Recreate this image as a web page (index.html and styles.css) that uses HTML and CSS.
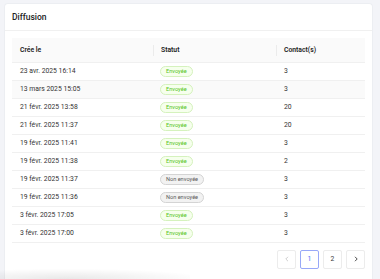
FILE: index.html
```html
<!DOCTYPE html>
<html lang="fr">
<head>
    <meta charset="UTF-8">
    <meta name="viewport" content="width=device-width, initial-scale=1.0">
    <title>Diffusion</title>
    <link rel="stylesheet" href="styles.css">
</head>
<body>
    <div class="card">
        <div class="card-header">Diffusion</div>
        <div class="card-body">
            <table class="table">
                <thead>
                    <tr>
                        <th class="col-date">Crée le</th>
                        <th class="col-status">Statut</th>
                        <th class="col-count">Contact(s)</th>
                    </tr>
                </thead>
                <tbody>
                    <tr><td>23 avr. 2025 16:14</td><td><span class="tag tag-sent">Envoyée</span></td><td>3</td></tr>
                    <tr class="is-hover"><td>13 mars 2025 15:05</td><td><span class="tag tag-sent">Envoyée</span></td><td>3</td></tr>
                    <tr><td>21 févr. 2025 13:58</td><td><span class="tag tag-sent">Envoyée</span></td><td>20</td></tr>
                    <tr><td>21 févr. 2025 11:37</td><td><span class="tag tag-sent">Envoyée</span></td><td>20</td></tr>
                    <tr><td>19 févr. 2025 11:41</td><td><span class="tag tag-sent">Envoyée</span></td><td>3</td></tr>
                    <tr><td>19 févr. 2025 11:38</td><td><span class="tag tag-sent">Envoyée</span></td><td>2</td></tr>
                    <tr><td>19 févr. 2025 11:37</td><td><span class="tag tag-unsent">Non envoyée</span></td><td>3</td></tr>
                    <tr><td>19 févr. 2025 11:36</td><td><span class="tag tag-unsent">Non envoyée</span></td><td>3</td></tr>
                    <tr><td>3 févr. 2025 17:05</td><td><span class="tag tag-sent">Envoyée</span></td><td>3</td></tr>
                    <tr><td>3 févr. 2025 17:00</td><td><span class="tag tag-sent">Envoyée</span></td><td>3</td></tr>
                </tbody>
            </table>

            <div class="pagination">
                <button class="page-btn is-disabled" aria-label="Précédent">
                    <svg width="6" height="6" viewBox="0 0 6 6"><path d="M4 0.8 L1.8 3 L4 5.2" fill="none" stroke="currentColor" stroke-width="0.9"/></svg>
                </button>
                <button class="page-btn is-active">1</button>
                <button class="page-btn">2</button>
                <button class="page-btn" aria-label="Suivant">
                    <svg width="6" height="6" viewBox="0 0 6 6"><path d="M2 0.8 L4.2 3 L2 5.2" fill="none" stroke="currentColor" stroke-width="0.9"/></svg>
                </button>
            </div>
        </div>
    </div>
    <div class="float-shadow"></div>
</body>
</html>
```

FILE: styles.css
```css
* {
    margin: 0;
    padding: 0;
    box-sizing: border-box;
}

:root {
    --page-bg: #f3f4f8;
    --surface: #ffffff;
    --border: #eceef2;
    --line: #f0f0f0;
    --head-bg: #fafafa;
    --text: #333333;
    --text-strong: #222222;
    --primary: #4c6ef5;
}

body {
    font-family: Roboto, 'Liberation Sans', sans-serif;
    background: var(--page-bg);
    color: var(--text);
    height: 100vh;
    overflow: hidden;
    position: relative;
    padding: 3px 7px 0 4px;
}

.card {
    background: var(--surface);
    border: 1px solid var(--border);
    border-bottom: none;
    border-radius: 4px 4px 0 0;
    height: 100%;
}

.card-header {
    height: 27px;
    padding: 0 7px;
    display: flex;
    align-items: center;
    font-size: 8.5px;
    font-weight: 500;
    color: var(--text-strong);
    border-bottom: 1px solid var(--line);
}

.card-body {
    padding: 7px 7px 0;
}

/* table */
.table {
    width: 100%;
    border-collapse: collapse;
    font-size: 6.8px;
}

.table th {
    height: 24px;
    background: var(--head-bg);
    text-align: left;
    font-weight: 600;
    color: var(--text-strong);
    padding: 0 8px;
    position: relative;
    border-bottom: 1px solid var(--line);
}

.table th + th::before {
    content: '';
    position: absolute;
    left: 0;
    top: 7px;
    height: 11px;
    width: 1px;
    background: #ebebeb;
}

.col-date { width: 141px; }
.col-status { width: 123px; }

.table td {
    height: 18px;
    padding: 0 8px;
    border-bottom: 1px solid var(--line);
}

.table td:nth-child(2) {
    padding-left: 7px;
}

.table tr.is-hover td {
    background: var(--head-bg);
}

.tag {
    display: inline-flex;
    align-items: center;
    height: 11px;
    padding: 0 5px;
    border-radius: 6px;
    font-size: 5.6px;
    border: 1px solid;
}

.tag-sent {
    color: #52c41a;
    background: #f6ffed;
    border-color: #d5f2bd;
}

.tag-unsent {
    color: #595959;
    background: #f2f2f2;
    border-color: #d4d4d4;
}

/* pagination */
.pagination {
    display: flex;
    justify-content: flex-end;
    gap: 4px;
    margin-top: 7px;
}

.page-btn {
    width: 19px;
    height: 19px;
    border: 1px solid #ececec;
    border-radius: 2px;
    background: var(--surface);
    font-family: inherit;
    font-size: 6.8px;
    color: #3a3a3a;
    display: flex;
    align-items: center;
    justify-content: center;
}

.page-btn.is-active {
    border-color: #98a8f8;
    color: var(--primary);
}

.page-btn.is-disabled {
    color: #c9c9c9;
}

/* blurred shadow of the element floating under the card */
.float-shadow {
    position: absolute;
    left: 0;
    bottom: 0;
    width: 190px;
    height: 14px;
    background: radial-gradient(ellipse 100% 100% at 35% 100%, rgba(0, 0, 0, 0.09), rgba(0, 0, 0, 0) 75%);
    pointer-events: none;
}
```
